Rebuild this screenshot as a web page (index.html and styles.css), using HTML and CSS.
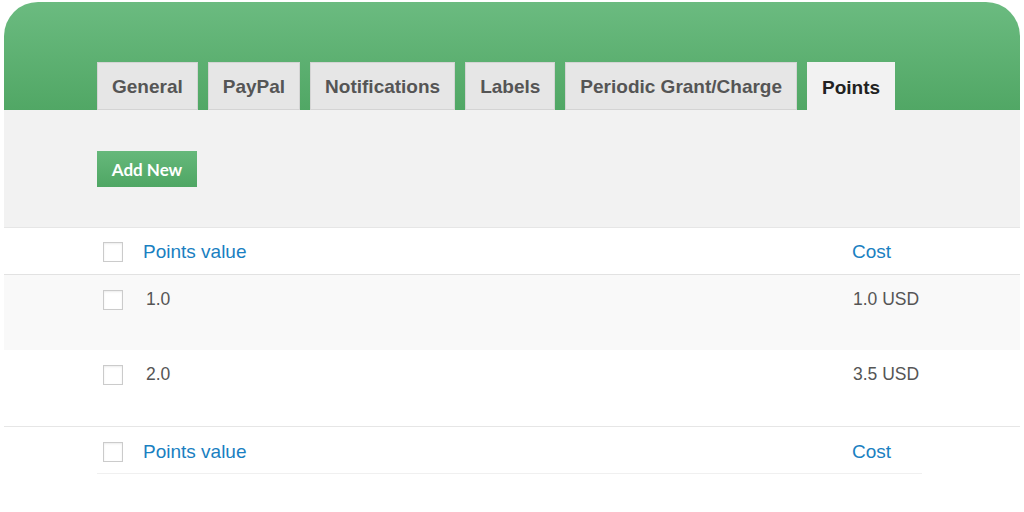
FILE: index.html
```html
<!DOCTYPE html>
<html lang="en">
<head>
    <meta charset="UTF-8">
    <meta name="viewport" content="width=device-width, initial-scale=1.0">
    <title>Points</title>
    <link rel="stylesheet" href="styles.css">
</head>
<body>
    <div class="card">
        <div class="header">
            <nav class="tabs">
                <a class="tab" href="#">General</a>
                <a class="tab" href="#">PayPal</a>
                <a class="tab" href="#">Notifications</a>
                <a class="tab" href="#">Labels</a>
                <a class="tab" href="#">Periodic Grant/Charge</a>
                <a class="tab tab-active" href="#">Points</a>
            </nav>
        </div>

        <div class="panel">
            <button class="btn-add">Add New</button>
        </div>

        <div class="list">
            <div class="row row-head">
                <div class="cells">
                    <span class="check"></span>
                    <a class="col-link" href="#">Points value</a>
                    <a class="col-link" href="#">Cost</a>
                </div>
            </div>
            <div class="row row-item row-alt">
                <div class="cells">
                    <span class="check"></span>
                    <span class="cell">1.0</span>
                    <span class="cell">1.0 USD</span>
                </div>
            </div>
            <div class="row row-item">
                <div class="cells">
                    <span class="check"></span>
                    <span class="cell">2.0</span>
                    <span class="cell">3.5 USD</span>
                </div>
            </div>
            <div class="row row-foot">
                <div class="cells">
                    <span class="check"></span>
                    <a class="col-link" href="#">Points value</a>
                    <a class="col-link" href="#">Cost</a>
                </div>
            </div>
        </div>
    </div>
</body>
</html>
```

FILE: styles.css
```css
* {
    box-sizing: border-box;
    margin: 0;
    padding: 0;
}

body {
    background-color: #fff;
    font-family: 'Liberation Sans', Arial, sans-serif;
    color: #555;
}

.card {
    margin: 2px 4px 0 4px;
}

.header {
    height: 108px;
    background: linear-gradient(to bottom, #6bbb80, #51a765);
    border-radius: 34px 34px 0 0;
    display: flex;
    align-items: flex-end;
    padding-left: 93px;
}

.tabs {
    display: flex;
    gap: 10px;
}

.tab {
    display: flex;
    align-items: center;
    height: 48px;
    padding: 2px 14px 0 14px;
    background-color: #e6e6e6;
    border: 1px solid #d4d4d4;
    color: #555;
    font-size: 19px;
    font-weight: bold;
    text-decoration: none;
}

.tab-active {
    background-color: #f2f2f2;
    border-color: #f2f2f2;
    border-bottom: none;
    color: #222;
}

.panel {
    background-color: #f2f2f2;
    height: 117px;
    padding: 41px 0 0 93px;
}

.btn-add {
    width: 100px;
    height: 36px;
    border: none;
    background: linear-gradient(to bottom, #66b87b, #4fa664);
    color: #fff;
    font-family: 'Lato', sans-serif;
    font-size: 17px;
    font-weight: bold;
    cursor: pointer;
}

.row {
    padding: 0 98px 0 93px;
}

.cells {
    display: grid;
    grid-template-columns: 40px 1fr 70px;
    padding-left: 6px;
}

.check {
    display: block;
    width: 20px;
    height: 20px;
    border: 1px solid #cbcbcb;
    background-color: #fff;
    box-shadow: inset 0 1px 2px rgba(0, 0, 0, 0.08);
}

.col-link {
    color: #1a7fc1;
    font-size: 19px;
    text-decoration: none;
    line-height: 20px;
}

.row-head {
    border-top: 1px solid #e6e6e6;
    border-bottom: 1px solid #e2e2e2;
}

.row-head .cells {
    height: 46px;
    align-items: center;
    padding-top: 1px;
}

.row-item .cells {
    height: 75px;
    padding-top: 15px;
}

.row-alt {
    background-color: #f9f9f9;
}

.cell {
    font-size: 17.5px;
    line-height: 18px;
    padding-left: 3px;
}

.cell + .cell {
    padding-left: 1px;
}

.row-foot {
    border-top: 1px solid #e6e6e6;
    margin-top: 1px;
}

.row-foot .cells {
    height: 47px;
    align-items: center;
    padding-top: 3px;
    border-bottom: 1px solid #f0f0f0;
}
```
